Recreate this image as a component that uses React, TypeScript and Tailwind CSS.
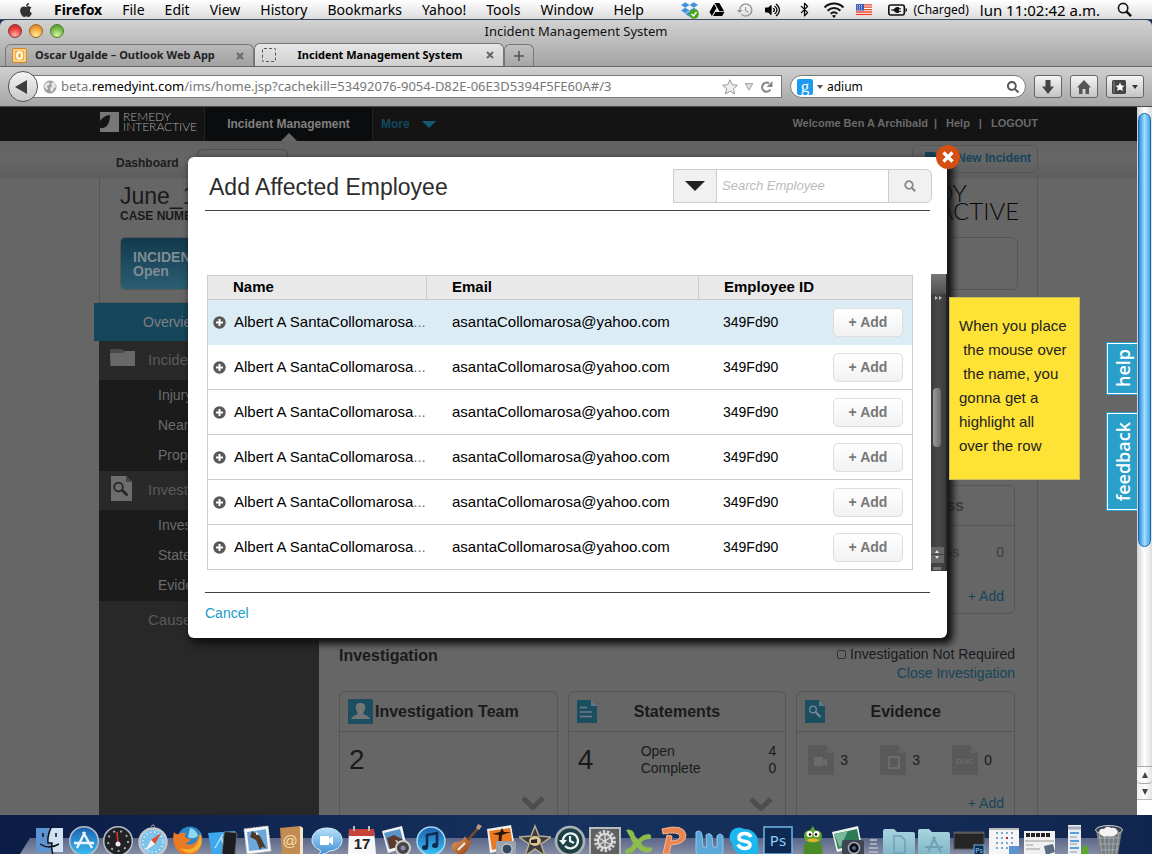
import React from "react";
import type { ReactNode } from "react";
import { FaApple, FaDropbox, FaGoogleDrive, FaVolumeUp, FaSearch } from "react-icons/fa";
import { MdHistory } from "react-icons/md";
import { Bluetooth } from "lucide-react";

const UI = "font-['Noto_Sans',sans-serif]";
const WEB = "font-['Liberation_Sans',Arial,sans-serif]";

function WifiIcon() {
  return (
    <svg viewBox="0 0 22 16" className="h-4 w-[22px]" fill="none" stroke="#111" strokeWidth="2">
      <path d="M1.5 5.5C7 .3 15 .3 20.500 5.500M4.600 8.700c3.700-3.500 9.100-3.500 12.800 0M7.700 11.700c2-1.700 4.600-1.700 6.600 0" />
      <path d="M11 16l-2-2.200c1.200-1 2.800-1 4 0z" fill="#111" stroke="none" />
    </svg>
  );
}

function FlagIcon() {
  return (
    <svg viewBox="0 0 16 12" className="h-3 w-4">
      <rect width="16" height="12" fill="#fff" />
      <path d="M0 .8h16M0 3.200h16M0 5.600h16M0 8h16M0 10.500h16" stroke="#e8452f" strokeWidth="1.300" />
      <rect width="8" height="6.500" fill="#3f5cb4" />
      <path d="M1 1.500h6M1 3.200h6M1 5h6" stroke="#fff" strokeWidth=".7" strokeDasharray="1 1" />
    </svg>
  );
}

function BatteryIcon() {
  return (
    <svg viewBox="0 0 22 12" className="h-3 w-[22px]">
      <rect x="1.800" y="1" width="15.500" height="10" rx="2" fill="none" stroke="#111" strokeWidth="1.600" />
      <path d="M18.500 4c2 .3 2 3.700 0 4z" fill="#111" />
      <path d="M4 6h3M6.500 6C8 4 9 3.500 11.500 3.500v5C9 8.500 8 8 6.500 6zM11.500 4.700h2.500M11.500 7.300h2.500" fill="#111" stroke="#111" strokeWidth="1" />
    </svg>
  );
}

function MenuBar() {
  return (
    <header className={`flex h-5 shrink-0 items-center justify-between border-b border-[#3a4a68] bg-linear-to-b from-white to-[#dcdcdc] pr-5 pl-[18px] text-[14px] leading-[18px] text-black ${UI}`}>
      <nav className="flex items-center gap-5 whitespace-nowrap">
        <FaApple className="h-4 w-4 text-[#333]" />
        <span className="font-bold">Firefox</span>
        {["File", "Edit", "View", "History", "Bookmarks", "Yahoo!", "Tools", "Window", "Help"].map((m) => (
          <span key={m}>{m}</span>
        ))}
      </nav>
      <div className="flex items-center gap-[11px] whitespace-nowrap">
        <span className="relative flex">
          <FaDropbox className="h-[17px] w-[17px] text-[#3d93dc]" />
          <svg viewBox="0 0 10 10" className="absolute -right-px -bottom-px h-2.5 w-2.5">
            <circle cx="5" cy="5" r="4.800" fill="#48a51f" />
            <path d="M2.500 5l2 2 3-4" fill="none" stroke="#fff" strokeWidth="1.400" />
          </svg>
        </span>
        <FaGoogleDrive className="h-[15px] w-4" />
        <MdHistory className="h-[18px] w-[18px] text-[#999]" />
        <FaVolumeUp className="mr-1.5 h-[14px] w-[15px]" />
        <Bluetooth className="h-[15px] w-[15px]" strokeWidth={2} />
        <WifiIcon />
        <FlagIcon />
        <span className="ml-1 flex items-center gap-1 text-[12px]">
          <BatteryIcon />
          (Charged)
        </span>
        <span className="text-[15px]">lun 11:02:42 a.m.</span>
        <svg viewBox="0 0 16 16" className="ml-1.5 h-[15px] w-[15px]" fill="none" stroke="#111">
          <circle cx="6.500" cy="6.500" r="5" strokeWidth="1.700" />
          <path d="M10.200 10.200L15 15" strokeWidth="2.600" />
        </svg>
      </div>
    </header>
  );
}

function TitleAndTabs() {
  return (
    <div className={`shrink-0 rounded-t-md bg-linear-to-b from-[#d2d2d2] to-[#a3a3a3] ${UI}`}>
      <div className="relative flex h-6 items-center justify-center">
        <div className="absolute top-1 left-2 flex gap-[7px]">
          <i className="h-3.5 w-3.5 rounded-full border border-[#8d3532] bg-[radial-gradient(circle_at_50%_85%,#ffb6ae,#ec3f3b_55%,#b02a2a)]" />
          <i className="h-3.5 w-3.5 rounded-full border border-[#9c6524] bg-[radial-gradient(circle_at_50%_85%,#ffef9c,#f0a23a_60%,#c0762a)]" />
          <i className="h-3.5 w-3.5 rounded-full border border-[#4e7a31] bg-[radial-gradient(circle_at_50%_85%,#d8f7a2,#73b843_60%,#4a8c2c)]" />
        </div>
        <h1 className="pb-0.5 text-[13px] leading-5 text-[#111]">Incident Management System</h1>
      </div>
      <div className="flex h-[23px] items-end border-b border-[#666] pl-[5px] text-[11px] font-bold whitespace-nowrap text-[#222]">
        <div className="flex h-[22px] w-[249px] items-center rounded-t-md border border-b-0 border-[#777] bg-linear-to-b from-[#b9b9b9] to-[#a2a2a2] pl-[6px]">
          <svg viewBox="0 0 15 15" className="mr-2 h-[15px] w-[15px]">
            <rect x=".5" y=".5" width="14" height="14" rx="1.500" fill="#f3b13f" stroke="#d98a16" />
            <rect x="2" y="2" width="11" height="11" fill="none" stroke="#fff" strokeWidth=".8" />
            <ellipse cx="7.500" cy="7.500" rx="2.500" ry="3.400" fill="none" stroke="#fff" strokeWidth="1.800" />
          </svg>
          <span className="flex-1">Oscar Ugalde – Outlook Web App</span>
          <TabClose />
        </div>
        <div className="flex h-[23px] w-[250px] items-center rounded-t-md border border-b-0 border-[#777] bg-linear-to-b from-[#e6e6e6] to-[#d0d0d0] pl-[7px] text-black">
          <i className="h-[14px] w-[14px] rounded-xs border border-dashed border-[#555]" />
          <span className="flex-1 pr-0.5 text-center">Incident Management System</span>
          <TabClose />
        </div>
        <button aria-label="New tab" className="flex h-[22px] w-[30px] items-center justify-center rounded-t-md border border-b-0 border-[#777] bg-linear-to-b from-[#c0c0c0] to-[#a6a6a6]">
          <svg viewBox="0 0 10 10" className="h-2.5 w-2.5"><path d="M5 0v10M0 5h10" stroke="#555" strokeWidth="1.600" /></svg>
        </button>
      </div>
    </div>
  );
}

function TabClose() {
  return (
    <button aria-label="Close tab" className="mr-[9px]">
      <svg viewBox="0 0 8 8" className="h-2 w-2"><path d="M1 1l6 6M7 1L1 7" stroke="#666" strokeWidth="2" /></svg>
    </button>
  );
}

function ToolButton({ label, children }: { label: string; children: ReactNode }) {
  return (
    <button aria-label={label} className="flex h-[23px] min-w-7 items-center justify-center gap-[6px] rounded-[3px] border border-[#666] bg-linear-to-b from-[#f5f5f5] to-[#c4c4c4] px-[5px] text-[#444]">
      {children}
    </button>
  );
}

function Toolbar() {
  return (
    <div className={`flex h-10 shrink-0 items-center border-b border-[#4a4a4a] bg-linear-to-b from-[#d0d0d0] to-[#a6a6a6] px-2 text-[12px] ${UI}`}>
      <button aria-label="Back" className="z-10 flex h-[31px] w-[30px] shrink-0 items-center justify-center rounded-full border border-[#555] bg-linear-to-b from-[#f5f5f5] to-[#c8c8c8]">
        <svg viewBox="0 0 12 14" className="mr-1 h-3.5 w-3"><path d="M12 0v14L0 7z" fill="#3d3d3d" /></svg>
      </button>
      <div className="-ml-2 flex h-[23px] flex-1 items-center border border-[#777] bg-white pr-[7px] pl-3">
        <svg viewBox="0 0 14 14" className="mr-1 h-3.5 w-3.5">
          <circle cx="7" cy="7" r="6.500" fill="#9d9d9d" />
          <path d="M2 4l3-2 2 1-1 2-2 1 1 3-1 1-3-3zM8 3l4-1 1 5-2 1-1 3-2 1-1-4 2-2z" fill="#e6e6e6" />
        </svg>
        <span className="flex-1 text-[13px] whitespace-nowrap text-[#777]">
          beta.<span className="text-black">remedyint.com</span>/ims/home.jsp?cachekill=53492076-9054-D82E-06E3D5394F5FE60A#/3
        </span>
        <svg viewBox="0 0 16 16" className="mr-1.5 h-4 w-4"><path d="M8 .8l2.200 4.900 5.200.5-4 3.500 1.200 5.300L8 12.200 3.400 15l1.200-5.300-4-3.500 5.200-.5z" fill="#eee" stroke="#999" /></svg>
        <svg viewBox="0 0 10 9" className="mr-1.5 h-2 w-2.5"><path d="M.7.7h8.600L5 8z" fill="#ddd" stroke="#999" /></svg>
        <svg viewBox="0 0 14 14" className="h-3.5 w-3.5"><path d="M10.500 9.500A4.500 4.500 0 1 1 9 3.300" fill="none" stroke="#888" strokeWidth="2.200" /><path d="M12.500 1v6h-6z" fill="#888" /></svg>
      </div>
      <div className="ml-2 flex h-[23px] w-[236px] items-center rounded-full border border-[#777] bg-white px-1.5">
        <span className="mr-1 flex h-4 w-4 items-center justify-center rounded-xs bg-[#1a9bf0] font-['Liberation_Serif',serif] text-[17px] leading-3 text-white">g</span>
        <i className="mr-1 h-0 w-0 border-x-[3px] border-t-4 border-x-transparent border-t-[#555]" />
        <input aria-label="Search the web" defaultValue="adium" className="min-w-0 flex-1 bg-transparent text-black outline-none" />
        <FaSearch className="h-3 w-3 text-[#555]" />
      </div>
      <div className="ml-2 flex gap-2">
        <ToolButton label="Downloads">
          <svg viewBox="0 0 14 14" className="h-3.5 w-3.5"><path d="M4.500 0h5v6.500H13L7 14 1 6.500h3.500z" fill="#444" /></svg>
        </ToolButton>
        <ToolButton label="Home">
          <svg viewBox="0 0 14 14" className="h-3.5 w-3.5"><path d="M7 0l7 7.500h-2V14H8.500V9h-3v5H2V7.500H0z" fill="#555" /></svg>
        </ToolButton>
        <ToolButton label="Bookmarks">
          <svg viewBox="0 0 14 14" className="h-3.5 w-3.5"><rect width="14" height="14" rx="1.500" fill="#444" /><path d="M2 1v12" stroke="#888" /><path d="M8 2.500l1.400 2.900 3.200.3-2.400 2.100.7 3.200L8 9.400 5.100 11l.7-3.200-2.400-2.100 3.200-.3z" fill="#fff" /></svg>
          <i className="h-0 w-0 border-x-[3px] border-t-4 border-x-transparent border-t-[#333]" />
        </ToolButton>
      </div>
    </div>
  );
}

function SiteHeader() {
  return (
    <div className="shrink-0 bg-[#141414] text-[11px] font-bold text-[#6a6a6a]">
      <div className="mx-auto flex h-[34px] max-w-[939px] items-stretch">
        <div className="flex w-[106px] items-center gap-1 border-r border-[#222] pb-1">
          <svg viewBox="0 0 20 20" className="h-5 w-5">
            <path d="M1 0h19v20H1v-4c6 1 10-4 10-13C7 3 3 6 1 9z" fill="#777" />
          </svg>
          <span className="font-['Lato',sans-serif] text-[12px] leading-[10px] font-light text-[#aaa]">REMEDY<br />INTERACTIVE</span>
        </div>
        <div className="relative flex w-[168px] items-center justify-center border-r border-[#222] bg-[#0b0c0d] text-[12px] text-[#808080]">
          Incident Management
          <i className="absolute bottom-0 h-0 w-0 border-x-8 border-b-8 border-x-transparent border-b-[#666]" />
        </div>
        <div className="flex items-center gap-3 pl-2 text-[12px] text-[#13495f]">
          More
          <i className="h-0 w-0 border-x-[7px] border-t-[7px] border-x-transparent border-t-[#135873]" />
        </div>
        <div className="ml-auto flex items-center pb-0.5 whitespace-pre">
          <span>Welcome Ben A Archibald</span>
          <span className="px-[6px]">|</span>
          <a href="#help" className="px-[3px]">Help</a>
          <span className="px-[6px]">|</span>
          <a href="#logout" className="pl-[3px]">LOGOUT</a>
        </div>
      </div>
    </div>
  );
}

function SubBar() {
  return (
    <div className="shrink-0 border-b border-[#5a5a5a] bg-linear-to-b from-[#626262] via-[#666] to-[#5e5e5e]">
      <div className="mx-auto flex h-9 max-w-[939px] items-start justify-between">
        <div className="flex">
          <span className="w-[98px] pt-[14px] pl-[17px] text-[12px] leading-4 font-bold text-[#1c1c1c]">Dashboard</span>
          <span className="mt-2 h-7 w-[91px] rounded-t-md border border-b-0 border-[#505050]" />
        </div>
        <a href="#new" className="mt-1 flex h-7 items-center gap-2 rounded-md border border-[#565656] pr-[6px] pb-0.5 pl-3 text-[12px] font-bold text-[#164459]">
          <svg viewBox="0 0 24 16" className="h-4 w-6"><path d="M0 2h10l2 3h12v11H0z" fill="#164459" /></svg>
          New Incident
        </a>
      </div>
    </div>
  );
}

const sections = [
  { title: "Incident", icon: "folder", items: ["Injury", "Near Miss", "Property"] },
  { title: "Investigation", icon: "search", items: ["Investigation", "Statements", "Evidence"] },
];

function Sidebar() {
  return (
    <aside className="w-[220px] shrink-0 bg-[#282828] text-[14px] text-[#6c6c6c]">
      <a href="#overview" className="-ml-[5px] flex h-[38px] items-center bg-[#15465b] pl-[49px] text-[#808080]">Overview</a>
      {sections.map((s) => (
        <div key={s.title}>
          <div className="flex h-[39px] items-center bg-[#292929] pl-[11px] text-[15px] text-[#5a5a5a]">
            {s.icon === "folder" ? (
              <svg viewBox="0 0 25 25" className="mb-1 h-[25px] w-[25px]"><path d="M0 3h12l2 2h11v15H0z" fill="#494949" /><path d="M0 7h13l2-2h10v15H1z" fill="#686868" /></svg>
            ) : (
              <svg viewBox="0 0 25 25" className="mb-1 h-[25px] w-[25px]"><path d="M1 0h15l6 6v19H1z" fill="#6d6d6d" /><path d="M16 0l6 6h-6z" fill="#444" /><circle cx="8.500" cy="11" r="4.300" fill="none" stroke="#252525" strokeWidth="1.700" /><path d="M12 14l5.500 5.500" stroke="#252525" strokeWidth="2.600" /></svg>
            )}
            <span className="pl-[13px]">{s.title}</span>
          </div>
          <ul className="bg-[#1b1b1b] pl-[59px]">
            {s.items.map((i) => (
              <li key={i} className="h-[30px] leading-[30px] last:h-[31px]">{i}</li>
            ))}
          </ul>
        </div>
      ))}
      <div className="flex h-[38px] items-center pl-[49px] text-[15px] text-[#5a5a5a]">Causes</div>
    </aside>
  );
}

function DocIcon({ kind }: { kind: "video" | "photo" | "doc" }) {
  return (
    <svg viewBox="0 0 26 30" className="h-[30px] w-[26px]">
      <path d="M0 0h19l7 8v22H0z" fill="#595959" />
      <path d="M19 0l7 8h-7z" fill="#626262" />
      {kind === "video" && <path d="M6 12h9v3l4-2v8l-4-2v2H6z" fill="#6a6a6a" />}
      {kind === "photo" && <path d="M9 12h10v11H9z" fill="none" stroke="#6c6c6c" strokeWidth="2" />}
      {kind === "doc" && <text x="13" y="19" textAnchor="middle" fontSize="8" fontWeight="bold" fill="#6c6c6c" fontFamily="Liberation Sans">DOC</text>}
    </svg>
  );
}

function Card({ icon, title, children }: { icon?: ReactNode; title: string; children: ReactNode }) {
  return (
    <section className="rounded-md border border-[#555] text-[#1a1a1a]">
      <div className="flex h-10 items-center border-b border-[#555] pl-2">
        {icon}
        <h3 className="flex-1 text-center text-[16px] leading-5 font-bold">{title}</h3>
      </div>
      {children}
    </section>
  );
}

function Chevron() {
  return <svg viewBox="0 0 24 14" className="h-3.5 w-6"><path d="M2 2l10 9.500L22 2" fill="none" stroke="#4d4d4d" strokeWidth="5" /></svg>;
}

function MainArea() {
  return (
    <main className="min-w-0 flex-1 pr-[22px] pl-5 text-[14px]">
      <div className="grid grid-cols-3 gap-2.5 pt-[182px]">
        <div className="col-start-3 h-[129px] rounded-md border border-[#565656] text-[#3f3f3f]">
          <h3 className="h-10 border-b border-[#565656] pr-[50px] text-right text-[16px] leading-10 font-bold">Loss</h3>
          <p className="flex h-[52px] items-center justify-end gap-[37px] pr-[10px]"><span>Loss</span><span>0</span></p>
          <p className="pt-2 pr-[10px] text-right leading-5"><a href="#loss" className="text-[#164459]">+ Add</a></p>
        </div>
      </div>
      <div className="flex justify-between pt-[31px] pb-2 text-[#1a1a1a]">
        <h2 className="text-[16px] leading-[22px] font-bold">Investigation</h2>
        <div className="text-right leading-[19px]">
          <label className="flex items-center gap-1">
            <input type="checkbox" className="h-[9px] w-[9px] appearance-none rounded-xs border border-[#333]" />
            Investigation Not Required
          </label>
          <a href="#close" className="text-[#164459]">Close Investigation</a>
        </div>
      </div>
      <div className="grid h-[180px] grid-cols-3 gap-2.5">
        <Card
          title="Investigation Team"
          icon={
            <svg viewBox="0 0 25 25" className="-mr-9 h-[25px] w-[25px]"><rect width="25" height="25" rx="1" fill="#1c4e62" /><path d="M12.500 4c3.500 0 5 2 4.700 5-.3 3-1.700 4-2 5.500 0 1.500 5.800 2 6.800 5.500H3c1-3.500 6.800-4 6.800-5.500-.3-1.500-1.700-2.500-2-5.500C7.500 6 9 4 12.500 4z" fill="#757575" /></svg>
          }
        >
          <div className="flex flex-col px-[9px] pt-3">
            <span className="text-[28px] leading-8">2</span>
            <span className="flex justify-end pt-5 pr-[3px]"><Chevron /></span>
          </div>
        </Card>
        <Card
          title="Statements"
          icon={<svg viewBox="0 0 20 23" className="-mr-7 h-[23px] w-5"><path d="M0 0h14l6 6v17H0z" fill="#1c4e62" /><path d="M14 0l6 6h-6z" fill="#5f7a85" /><path d="M3 7.500h7M3 12h12M3 16.500h12" stroke="#6f7f85" strokeWidth="1.600" /></svg>}
        >
          <div className="flex flex-col px-[9px] pt-[11px]">
            <div className="flex">
              <span className="w-[63px] pt-px text-[28px] leading-8">4</span>
              <dl className="grid flex-1 grid-cols-[1fr_auto] leading-[17px]">
                <dt>Open</dt><dd>4</dd>
                <dt>Complete</dt><dd>0</dd>
              </dl>
            </div>
            <span className="flex justify-end pt-5 pr-[3px]"><Chevron /></span>
          </div>
        </Card>
        <Card
          title="Evidence"
          icon={<svg viewBox="0 0 20 23" className="-mr-7 h-[23px] w-5"><path d="M0 0h14l6 6v17H0z" fill="#1c4e62" /><path d="M14 0l6 6h-6z" fill="#5f7a85" /><circle cx="8" cy="9.500" r="3.300" fill="none" stroke="#7b8a90" strokeWidth="1.300" /><path d="M10.500 12l5 5" stroke="#7b8a90" strokeWidth="2" /></svg>}
        >
          <div className="flex justify-between pt-[13px] pr-[22px] pl-[11px]">
            <span className="flex items-center gap-[6px]"><DocIcon kind="video" />3</span>
            <span className="flex items-center gap-[6px]"><DocIcon kind="photo" />3</span>
            <span className="flex items-center gap-[6px]"><DocIcon kind="doc" />0</span>
          </div>
          <p className="pt-[18px] pr-[10px] text-right leading-5"><a href="#evidence" className="text-[#164459]">+ Add</a></p>
        </Card>
      </div>
    </main>
  );
}

const employees = Array.from({ length: 6 }, (_, id) => ({
  id,
  name: "Albert A SantaCollomarosa",
  email: "asantaCollomarosa@yahoo.com",
  code: "349Fd90",
}));

function EmployeeTable() {
  return (
    <table className="ml-0.5 w-[706px] table-fixed border-separate border-spacing-0 border-x border-[#ccc] text-left text-[15px] text-black">
      <colgroup>
        <col className="w-[219px]" />
        <col className="w-[272px]" />
        <col />
      </colgroup>
      <thead>
        <tr className="h-[25px] bg-[#e9e9e9] leading-5">
          <th className="border-y border-r border-[#ccc] p-0 pb-px pl-[25px]">Name</th>
          <th className="border-y border-r border-[#ccc] p-0 pb-px pl-[25px]">Email</th>
          <th className="border-y border-[#ccc] p-0 pb-px pl-[25px]">Employee ID</th>
        </tr>
      </thead>
      <tbody>
        {employees.map((e) => (
          <tr key={e.id} className="h-[45px] hover:bg-[#dcecf4] first:bg-[#dcecf4] [&>td]:border-b [&>td]:border-[#ccc] [&>td]:p-0 first:[&>td]:border-[#dcecf4]">
            <td>
              <span className="flex items-center pl-[5px]">
                <button aria-label="Show details" className="mr-2 shrink-0">
                  <svg viewBox="0 0 13 13" className="h-[13px] w-[13px]"><circle cx="6.500" cy="6.500" r="6.200" fill="#585858" /><path d="M6.500 3v7M3 6.500h7" stroke="#fff" strokeWidth="2" /></svg>
                </button>
                {e.name}<span className="text-[#777]">...</span>
              </span>
            </td>
            <td><span className="pl-[25px]">{e.email}</span></td>
            <td>
              <span className="flex items-center justify-between pr-[9px] pl-6">
                <span className="text-[14px]">{e.code}</span>
                <button className="h-[29px] w-[70px] rounded-[5px] border border-[#ddd] bg-linear-to-b from-white to-[#f2f2f2] text-[14px] leading-5 font-bold text-[#777]">+ Add</button>
              </span>
            </td>
          </tr>
        ))}
      </tbody>
    </table>
  );
}

function InnerScrollbar() {
  return (
    <div className="absolute top-[117px] -right-px flex h-[297px] w-[17px] flex-col items-center border-r-2 border-[#222] bg-linear-to-r from-[#3c3c3c] via-[#484848] to-[#3a3a3a]">
      <i className="h-5 w-full bg-linear-to-b from-[#777] to-[#505050]" />
      <svg viewBox="0 0 10 8" className="h-2 w-2.5"><path d="M1 2l3 2-3 2zM5 2l3 2-3 2z" fill="#bbb" /></svg>
      <i className="mt-[86px] mr-[3px] h-[59px] w-2 rounded-full bg-linear-to-r from-[#999] to-[#6c6c6c]" />
      <svg viewBox="0 0 15 24" className="mt-auto h-6 w-[15px]"><path d="M0 0h13v16H0z" fill="#666" /><path d="M4 6l2-3 2 3zM4 9l2 3 2-3z" fill="#ddd" /><path d="M0 7.500h13" stroke="#444" /><path d="M2 20h8v3H2z" fill="#777" /></svg>
    </div>
  );
}

function Modal() {
  return (
    <div role="dialog" aria-label="Add Affected Employee" className="relative h-[481px] w-[759px] rounded-md bg-white px-[17px] shadow-[4px_4px_7px_2px_#111]">
      <div className="flex h-[54px] items-center justify-between border-b border-[#444] pl-1">
        <h2 className="pt-1.5 text-[23px] leading-7 text-[#2d2d2d]">Add Affected Employee</h2>
        <div className="mt-1 -mr-0.5 flex h-[34px] w-[259px] rounded-r-md border border-[#ccc] bg-[#f1f1f1]">
          <button aria-label="Search options" className="flex w-[43px] items-center justify-center border-r border-[#ccc]">
            <i className="h-0 w-0 border-x-10 border-t-10 border-x-transparent border-t-[#222]" />
          </button>
          <input aria-label="Search Employee" placeholder="Search Employee" className="min-w-0 flex-1 bg-white pl-[5px] text-[13px] italic outline-none placeholder:text-[#bbb]" />
          <button aria-label="Search" className="flex w-[43px] items-center justify-center border-l border-[#ccc]">
            <svg viewBox="0 0 12 12" className="h-3 w-3" fill="none" stroke="#888"><circle cx="5" cy="5" r="3.800" strokeWidth="1.800" /><path d="M7.700 7.700l3.500 3.500" strokeWidth="2.200" /></svg>
          </button>
        </div>
      </div>
      <div className="h-[64px]" />
      <EmployeeTable />
      <div className="mt-[22px] border-t border-[#444] pt-[10px] text-[14px] leading-5">
        <a href="#cancel" className="text-[#219bc8]">Cancel</a>
      </div>
      <InnerScrollbar />
      <button aria-label="Close" className="absolute -top-3 -right-[13px] z-10 flex h-6 w-6 items-center justify-center rounded-full bg-[#d64f12]">
        <svg viewBox="0 0 12 12" className="h-3 w-3"><path d="M1.500 1.500l9 9M10.500 1.500l-9 9" stroke="#fff" strokeWidth="3.200" /></svg>
      </button>
      <aside className="absolute top-[140px] left-[761px] h-[183px] w-[131px] border border-[#c9bd62] bg-[#ffe236] px-[9px] pt-4 text-[15px] leading-6 whitespace-pre text-[#222]">
        {"When you place\n the mouse over\n the name, you\ngonna get a\nhighlight all\nover the row"}
      </aside>
    </div>
  );
}

function SideTab({ label, className }: { label: string; className: string }) {
  return (
    <button className={`w-[31px] border border-r-0 border-[#2a9fca] bg-[#2a9fca] ${className}`}>
      <span className="flex h-full items-center justify-center border border-r-0 border-white">
        <span className="rotate-180 font-['Open_Sans',sans-serif] text-[18px] leading-6 font-semibold text-white [writing-mode:vertical-rl]">{label}</span>
      </span>
    </button>
  );
}

function SideTabs() {
  return (
    <div className="absolute top-[235px] right-0 flex flex-col gap-[17px]">
      <SideTab label="help" className="h-[53px]" />
      <SideTab label="feedback" className="h-[99px]" />
    </div>
  );
}

function PageScrollbar() {
  return (
    <div className="flex w-[15px] shrink-0 flex-col bg-linear-to-r from-[#d0d0d0] via-white to-[#ddd] pt-1.5">
      <i className="mx-px h-[434px] rounded-full border border-[#1668b5] bg-linear-to-r from-[#2d86d6] via-[#9fe0ff] to-[#3fa4e8]" />
      <div className="mt-auto flex h-[49px] flex-col bg-linear-to-r from-[#eee] via-white to-[#e4e4e4]">
        <span className="flex h-[18px] items-center justify-center rounded-b-sm border-y border-[#aaa]"><i className="h-0 w-0 border-x-[3px] border-b-[6px] border-x-transparent border-b-[#444]" /></span>
        <span className="flex h-4 items-center justify-center border-b border-[#bbb]"><i className="h-0 w-0 border-x-[3px] border-t-[6px] border-x-transparent border-t-[#444]" /></span>
        <span className="flex-1 bg-white" />
      </div>
    </div>
  );
}

function LargeLogo() {
  return (
    <p className="w-[147px] font-['Lato',sans-serif] text-[24px] leading-[18px] font-light text-[#080808]">REMEDY<br />INTERACTIVE</p>
  );
}

function WebPage() {
  return (
    <div className={`flex min-h-0 flex-1 bg-[#666] ${WEB}`}>
      <div className="relative flex min-w-0 flex-1 flex-col overflow-hidden">
        <SiteHeader />
        <SubBar />
        <div className="mx-auto flex w-full max-w-[939px] flex-1 flex-col border-r border-[#555]">
          <div className="h-[125px] shrink-0 border-b border-l border-[#555] pt-1.5 pr-[19px] pl-5">
            <div className="flex h-[53px] justify-between">
              <div className="text-[#1a1a1a]">
                <p className="text-[23px] leading-6">June_18</p>
                <p className="text-[12px] leading-4 font-bold">CASE NUMBER</p>
              </div>
              <LargeLogo />
            </div>
            <div className="h-[53px] rounded-md border border-[#555]">
              <div className="h-[51px] w-[220px] rounded-l-sm bg-linear-to-b from-[#11394b] to-[#2c5e74] pt-3 pl-3 text-[14px] leading-[14px] font-bold text-[#7f8d93]">INCIDENT<br />Open</div>
            </div>
          </div>
          <div className="flex min-h-0 flex-1">
            <Sidebar />
            <MainArea />
          </div>
        </div>
        <div className="absolute inset-x-0 top-[50px] flex justify-center pr-0.5"><Modal /></div>
        <SideTabs />
      </div>
      <PageScrollbar />
    </div>
  );
}

function Defs() {
  return (
    <svg className="absolute h-0 w-0" aria-hidden="true">
      <defs>
        <linearGradient id="blue" x1="0" y1="0" x2="0" y2="1"><stop offset="0" stopColor="#1d5fae" /><stop offset="1" stopColor="#39c0f5" /></linearGradient>
        <linearGradient id="sky" x1="0" y1="0" x2="0" y2="1"><stop offset="0" stopColor="#b9e0f8" /><stop offset="1" stopColor="#3b8fd6" /></linearGradient>
        <linearGradient id="folder" x1="0" y1="0" x2="0" y2="1"><stop offset="0" stopColor="#a9d4de" /><stop offset="1" stopColor="#7fb5c6" /></linearGradient>
        <linearGradient id="wood" x1="0" y1="0" x2="1" y2="1"><stop offset="0" stopColor="#f0a05a" /><stop offset="1" stopColor="#8a3c12" /></linearGradient>
      </defs>
    </svg>
  );
}

const dockApps: { name: string; art: ReactNode }[] = [
  { name: "Finder", art: <><rect x="3" y="4" width="27" height="24" fill="#5b93d3" /><path d="M18 4h12v24H19l-1-9h-3q1-8 3-15z" fill="#cfe3f5" /><path d="M19 2q-5 9-4 17h4q-1 5 1 12M7 20q9 6 19 0M10 9v4M23 9v4" fill="none" stroke="#111" strokeWidth="1.500" /></> },
  { name: "App Store", art: <><circle cx="16" cy="17" r="14.300" fill="url(#blue)" stroke="#b8bec8" strokeWidth="1.500" /><path d="M9 24L17 8M15 8l9 16M6 19h20" stroke="#e9f6ff" strokeWidth="2.400" /></> },
  { name: "Dashboard", art: <><circle cx="16" cy="17" r="14.300" fill="#202225" stroke="#b8bec8" strokeWidth="1.500" /><circle cx="16" cy="17" r="10" fill="none" stroke="#aaa" strokeWidth="2" strokeDasharray="2 5" /><path d="M16 20L15 8" stroke="#e33" strokeWidth="1.500" /><circle cx="16" cy="20" r="2.500" fill="#eee" /></> },
  { name: "Safari", art: <><circle cx="16" cy="18" r="13.500" fill="#7cc4ea" stroke="#c3c8ce" strokeWidth="2.500" /><circle cx="16" cy="18" r="10" fill="none" stroke="#fff" strokeWidth="1.500" strokeDasharray="1 3" /><path d="M24 9l-6 11-4-4z" fill="#e04b31" /><path d="M8 27l6-11 4 4z" fill="#f4f4f4" /><circle cx="16" cy="2.500" r="1.500" fill="none" stroke="#aaa" /></> },
  { name: "Firefox", art: <><circle cx="18" cy="15" r="12.500" fill="#2a86c8" /><path d="M18 4q6 1 8 8-5 4-10 1z" fill="#8fd8f0" /><path d="M2 8q2 3 5 2 3-2 7-1-2 3 0 5l5 1q-2 4-6 4 5 4 11-1 3-4 3-8 6 8-1 17-8 8-18 2Q-1 21 2 8z" fill="#ec7a22" /><path d="M28 9q5 12-4 18-9 5-16-3 12 4 17-4 3-5 3-11z" fill="#f6b02f" /></> },
  { name: "Simulator", art: <><path d="M1 9l27-2 2 3-5 20H5z" fill="#3da7ee" /><path d="M8 24L16 10M14 13l4 12" stroke="#b6defa" strokeWidth="1.500" /><rect x="16" y="8" width="13" height="23" rx="2" fill="#1c1d20" stroke="#777" strokeWidth=".8" transform="rotate(6 22 20)" /></> },
  { name: "Mail", art: <><path d="M3 5l24-3 3 25-24 3z" fill="#f8f8f8" stroke="#ccc" strokeDasharray="2 1" /><path d="M6 8l19-3 2 20-19 2z" fill="#6ba9dc" /><path d="M11 7l8 5 6 12-4-1-2 3-4-10-6-3z" fill="#4f3a2a" /><path d="M15 8l3 2-3 1z" fill="#fff" /></> },
  { name: "Contacts", art: <><path d="M4 4l20-2 3 2v27H6z" fill="#c28c50" /><path d="M24 2l3 2v27l-3-1z" fill="#f1e6d0" /><text x="14" y="22" fontSize="15" textAnchor="middle" fill="#f4dcae" fontFamily="Liberation Sans">@</text></> },
  { name: "Messages", art: <><path d="M16 4c9 0 15 5 15 12s-6 11-13 11q-2 3-11 4 4-3 2-5c-5-2-8-6-8-10C1 9 7 4 16 4z" fill="url(#sky)" stroke="#d7ecfa" /><path d="M9 12h9v3l4-3v9l-4-3v3H9z" fill="#fff" /></> },
  { name: "Calendar", art: <><path d="M3 6h25l2 24H2z" fill="#f7f7f7" /><path d="M3 5h25v7H3z" fill="#c9423a" /><path d="M8 2v5M23 2v5" stroke="#bbb" strokeWidth="2" /><text x="16" y="25" fontSize="15" fontWeight="bold" textAnchor="middle" fill="#222" fontFamily="Liberation Sans">17</text></> },
  { name: "iPhoto", art: <><path d="M2 7l20-5 5 21-19 6z" fill="#f2f2f2" /><path d="M4 9l16-4 4 15-15 5z" fill="#5a93c8" /><path d="M7 14l7-3 8 4 2 6-14 4z" fill="#5b3a2c" /><path d="M15 16l3 1-1 2z" fill="#eee" /><circle cx="23" cy="24" r="7" fill="#444" stroke="#ccc" strokeWidth="2" /><circle cx="23" cy="24" r="2.500" fill="#88a" /></> },
  { name: "iTunes", art: <><circle cx="16" cy="17" r="14" fill="url(#blue)" stroke="#9fd8f5" strokeWidth="1.500" /><path d="M12 23V11l10-2v12" fill="none" stroke="#102a50" strokeWidth="2.600" /><ellipse cx="10" cy="23.500" rx="3" ry="2.500" fill="#102a50" /><ellipse cx="20" cy="21.500" rx="3" ry="2.500" fill="#102a50" /></> },
  { name: "GarageBand", art: <><path d="M16 18L30 2" stroke="#7c4a28" strokeWidth="2.500" /><path d="M28 0l4 2-3 4-3-2z" fill="#b98" /><path d="M15 12l2 4 5 2q-3 3-4 7-3 7-10 5-7-3-6-9 1-3 6-3 5-1 7-6z" fill="url(#wood)" /><path d="M8 26l7-7" stroke="#eee" strokeWidth="2" /></> },
  { name: "Image Capture", art: <><path d="M2 5l24-4 4 22-25 6z" fill="#f2f2f2" /><path d="M4 7l21-3 3 17-21 5z" fill="#ec7a22" /><path d="M13 23l1-12-7-1 8-2 2-4 2 4 7 0-9 3-1 11z" fill="#2b1608" /><rect x="11" y="17" width="20" height="14" rx="2" fill="#9aa3ad" /><circle cx="22" cy="25" r="5" fill="#33475e" stroke="#dde" /></> },
  { name: "iMovie", art: <><path d="M16 2l4 10 12 1-10 7 4 12-10-7-10 7 4-12-10-7 12-1z" fill="#3d3c3a" stroke="#b7ad94" strokeWidth="1.500" /><ellipse cx="16" cy="17" rx="6" ry="5" fill="#d9c493" /><path d="M12 16l6-1v4h-6z" fill="#222" /></> },
  { name: "Time Machine", art: <><circle cx="16" cy="17" r="14" fill="#1e3f43" stroke="#aab4b6" strokeWidth="2.600" /><path d="M9 17a7.500 7.500 0 1 1 2 5M16 12v5l4 2" fill="none" stroke="#eaf5f3" strokeWidth="2.200" /><path d="M5 16h8l-4 5z" fill="#eaf5f3" /></> },
  { name: "System Preferences", art: <><rect x="1" y="4" width="30" height="28" fill="#5e6062" stroke="#bbb" strokeWidth="2" /><circle cx="16" cy="17" r="9" fill="none" stroke="#d0d0d0" strokeWidth="4" strokeDasharray="2.500 1.500" /><circle cx="16" cy="17" r="7" fill="#777" stroke="#ddd" strokeWidth="2" /><path d="M16 10v14M10 14l12 7M22 13l-12 8" stroke="#ddd" strokeWidth="1.300" /></> },
  { name: "Excel", art: <><path d="M3 6q7-2 9 6l3 4q4-6 11-6 4 2 1 5-7 0-9 4 4 6 10 4 3 3-1 5-8 2-13-5-4 7-10 7-4-3 0-5 5-1 6-6-4-8-7-13z" fill="#8cbd4b" /></> },
  { name: "PowerPoint", art: <><path d="M4 5q22-6 24 6 0 9-15 10l-2 9H5l4-19 5 1-1 5q9 0 9-5-2-5-17-2z" fill="#ea8552" stroke="#f5b593" /></> },
  { name: "Word", art: <><path d="M3 8q5-3 6 3l1 12h4l-1-12q4-3 6 1l1 11h4V12q3-4 6 0v17q-5 4-9 1-5 4-9 1-8 3-9-4z" fill="#5ba7d8" stroke="#8fc8ea" /></> },
  { name: "Skype", art: <><circle cx="11" cy="13" r="9.500" fill="#1db7ef" /><circle cx="17" cy="18" r="13" fill="#1db7ef" /><circle cx="24" cy="25" r="7" fill="#1db7ef" /><path d="M23 13q-2-4-7-3.500-5 .5-5 4 0 3 5.500 3.800 5.500.7 5.500 3.700 0 3-5 3.500-5 0-7-4" fill="none" stroke="#fff" strokeWidth="3.600" /></> },
  { name: "Photoshop", art: <><rect x="2" y="3" width="28" height="27" fill="#0c2a52" stroke="#6fb7e6" strokeWidth="1.500" /><text x="16" y="22" fontSize="15" textAnchor="middle" fill="#8fd0f7" fontFamily="Noto Sans">Ps</text></> },
  { name: "Adium", art: <><path d="M16 15q12 2 9 17H7Q4 17 16 15z" fill="#4a8b25" /><path d="M16 2l2 4q8 1 7 7-1 6-9 6t-9-6q-1-6 6-7z" fill="#5ea32d" /><circle cx="12.500" cy="10" r="3" fill="#fff" /><circle cx="19.500" cy="10" r="3" fill="#fff" /><circle cx="13" cy="10.500" r="1.200" /><circle cx="19" cy="10.500" r="1.200" /><path d="M9 16q7-3 14 0-7 4-14 0z" fill="#e9b52c" /></> },
  { name: "Photo Booth", art: <><path d="M0 8l26-6 4 20-25 6z" fill="#eef3ee" /><path d="M2 10l23-5 3 15-22 5z" fill="#2d7a57" /><path d="M2 10l14-3-8 17z" fill="#78b99a" /><rect x="10" y="16" width="22" height="15" rx="2" fill="#3d4650" /><circle cx="22" cy="24" r="5.500" fill="#0d0f12" stroke="#aab" strokeWidth="1.500" /><circle cx="22" cy="24" r="2" fill="#3a6ea0" /></> },
];

const dockItems: { name: string; art: ReactNode }[] = [
  { name: "Documents", art: <><path d="M0 7q0-2 2-2h9l3 3h16q2 0 2 2v22H0z" fill="url(#folder)" /><path d="M11 12h7l4 4v13H11z" fill="none" stroke="#6ba2b4" strokeWidth="1.500" /></> },
  { name: "Applications", art: <><path d="M0 7q0-2 2-2h9l3 3h16q2 0 2 2v22H0z" fill="url(#folder)" /><path d="M10 28l7-15M15 13l8 15M7 23h18" stroke="#6ba2b4" strokeWidth="2" /></> },
  { name: "Photoshop window", art: <><rect x="1" y="8" width="30" height="17" fill="#262626" stroke="#555" /><path d="M1 9h30" stroke="#777" /><rect x="21" y="21" width="10" height="10" fill="#0c2a52" stroke="#6fb7e6" /><text x="26" y="29" fontSize="7" textAnchor="middle" fill="#8fd0f7" fontFamily="Noto Sans">Ps</text></> },
  { name: "Finder window", art: <><rect x="1" y="4" width="30" height="26" fill="#f5f5f5" /><path d="M1 5h30" stroke="#bbb" strokeWidth="2" /><path d="M8 9h20M8 14h20M8 19h20M8 24h16" stroke="#7ba6cf" strokeWidth="2" strokeDasharray="2 3" /><path d="M18 14h2M23 24h2" stroke="#b23" strokeWidth="2" /><rect x="21" y="22" width="10" height="9" fill="#5b93d3" /></> },
  { name: "Preview window", art: <><rect x="1" y="7" width="31" height="23" fill="#f0f0f0" /><path d="M3 11h24" stroke="#222" strokeWidth="4" strokeDasharray="4 1" /><path d="M2 17h29M3 21h7M3 25h14" stroke="#999" /><path d="M21 22l9-2 2 8-9 3z" fill="#5a6d80" /></> },
  { name: "Contacts window", art: <><rect x="10" y="1" width="13" height="30" fill="#e8eef4" /><path d="M10 4h13" stroke="#aab" strokeWidth="3" /><path d="M12 9h9M12 17h9M12 24h9" stroke="#5a9fd8" strokeWidth="2" /><path d="M12 13h7M12 20h7M12 28h7" stroke="#999" /><path d="M27 21q5 2 3 10h-6q-2-8 3-10z" fill="#5ea32d" /></> },
  { name: "Trash", art: <><path d="M3 6l4 25h18l4-25z" fill="#767b80" /><path d="M6 8l3 23M11 9l2 22M16 9v22M21 9l-2 22M26 8l-3 23M5 14h22M6 20h20M7 26h18" stroke="#adb2b7" strokeWidth=".8" /><ellipse cx="16" cy="6" rx="13.500" ry="4.500" fill="#3f4852" stroke="#c4c9ce" /><path d="M6 8q1-4 5-3 3-4 7-1 5-1 7 4-4 6-10 4-6 2-9-4z" fill="#f3f3f3" /></> },
];

function DockIcon({ name, art }: { name: string; art: ReactNode }) {
  return <svg role="img" aria-label={name} viewBox="0 0 32 32" className="h-8 w-8 shrink-0">{art}</svg>;
}

function Dock() {
  return (
    <footer className="relative h-[39px] shrink-0 overflow-hidden bg-linear-to-r from-[#0b1c46] via-[#17325f] to-[#10264f]">
      <div className="absolute inset-x-5 top-[23px] bottom-0 bg-linear-to-b from-[#5b6789] to-[#858da4] [clip-path:polygon(10px_0,calc(100%-28px)_0,calc(100%-16px)_100%,0_100%)]" />
      <div className="relative flex pt-[9px] pr-[27px] pl-[33px]">
        <div className="flex flex-1 justify-between">
          {dockApps.map((a) => <DockIcon key={a.name} {...a} />)}
        </div>
        <svg viewBox="0 0 19 32" className="h-8 w-[19px] shrink-0"><path d="M6 16h7M6 20h7M5 24h9M5 28h9" stroke="#a9aebd" strokeWidth="2" /></svg>
        <div className="flex gap-[3px]">
          {dockItems.map((a) => <DockIcon key={a.name} {...a} />)}
        </div>
      </div>
    </footer>
  );
}

export default function App() {
  return (
    <div className="flex h-screen flex-col overflow-hidden bg-[#17325f]">
      <Defs />
      <MenuBar />
      <TitleAndTabs />
      <Toolbar />
      <WebPage />
      <Dock />
    </div>
  );
}
